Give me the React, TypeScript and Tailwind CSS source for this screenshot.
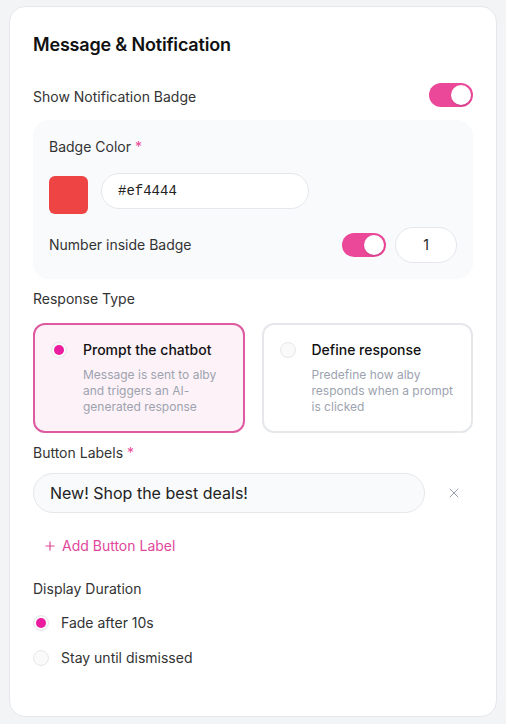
import { X, Plus } from "lucide-react";

function Toggle() {
  return (
    <div className="flex h-6 w-11 shrink-0 items-center justify-end rounded-full bg-[#ec4899] p-[2px]">
      <div className="h-5 w-5 rounded-full bg-white shadow-[0_1px_2px_rgba(0,0,0,0.15)]" />
    </div>
  );
}

function Radio({ on }: { on?: boolean }) {
  return (
    <div className="flex h-4 w-4 shrink-0 items-center justify-center rounded-full border border-gray-200 bg-[#fafafb]">
      {on && <div className="h-[10px] w-[10px] rounded-full bg-[#ec1c9f]" />}
    </div>
  );
}

const responseTypes = [
  {
    title: "Prompt the chatbot",
    body: "Message is sent to alby and triggers an AI-generated response",
    active: true,
  },
  {
    title: "Define response",
    body: "Predefine how alby responds when a prompt is clicked",
    active: false,
  },
];

export default function App() {
  return (
    <div className="min-h-[724px] bg-[#f3f4f6] pt-[6px] font-['Inter',sans-serif] text-[#333]">
      <div className="mx-[9px] h-[711px] rounded-2xl border border-gray-200 bg-white px-[23px] pt-6">
        <h2 className="text-lg leading-7 font-semibold tracking-[-0.01em] text-[#111]">
          Message &amp; Notification
        </h2>

        <div className="mt-6 flex items-center justify-between">
          <span className="mt-[3px] text-sm leading-5">Show Notification Badge</span>
          <Toggle />
        </div>

        <div className="mt-[13px] rounded-2xl bg-[#f8fafc] px-4 pt-[17px] pb-4">
          <p className="text-sm leading-5">
            Badge Color <span className="text-[#ec4899]">*</span>
          </p>
          <div className="mt-4 flex items-start gap-[13px]">
            <div className="mt-[3px] h-[38px] w-[39px] rounded-md bg-[#ef4444]" />
            <div className="flex h-9 w-[208px] items-center rounded-full border border-gray-200 bg-white px-4 font-['Liberation_Mono',monospace] text-sm text-[#222]">
              #ef4444
            </div>
          </div>
          <div className="mt-[13px] flex items-center justify-between">
            <span className="text-sm leading-5">Number inside Badge</span>
            <div className="flex items-center gap-[9px]">
              <Toggle />
              <div className="flex h-9 w-[62px] items-center justify-center rounded-full border border-gray-200 bg-white text-sm text-[#222]">
                1
              </div>
            </div>
          </div>
        </div>

        <p className="mt-[10px] text-sm leading-5">Response Type</p>
        <div className="mt-[14px] grid grid-cols-2 gap-[17px]">
          {responseTypes.map((r) => (
            <div
              key={r.title}
              className={
                r.active
                  ? "flex h-[110px] gap-4 rounded-xl border-2 border-[#de5aa0] bg-[#fdf2f8] pt-[15px] pr-4 pl-4"
                  : "flex h-[110px] gap-4 rounded-xl border-2 border-gray-200 bg-white pt-[15px] pr-4 pl-4"
              }
            >
              <div className="pt-[2px]">
                <Radio on={r.active} />
              </div>
              <div>
                <p className="text-sm leading-5 font-medium text-[#111]">{r.title}</p>
                <p className="mt-[7px] text-xs leading-4 text-[#9ca3af]">{r.body}</p>
              </div>
            </div>
          ))}
        </div>

        <p className="mt-[10px] text-sm leading-5">
          Button Labels <span className="text-[#ec4899]">*</span>
        </p>
        <div className="mt-[10px] flex items-center gap-[13px]">
          <div className="flex h-10 w-[392px] items-center rounded-full border border-gray-200 bg-[#f8fafc] px-4 text-base text-[#222]">
            New! Shop the best deals!
          </div>
          <button className="flex h-8 w-8 items-center justify-center text-gray-400">
            <X size={16} strokeWidth={1.5} />
          </button>
        </div>

        <button className="mt-[23px] ml-[10px] flex items-center gap-[5px] text-sm leading-5 text-[#e0479a]">
          <Plus size={14} strokeWidth={2} />
          Add Button Label
        </button>

        <p className="mt-[23px] text-sm leading-5">Display Duration</p>
        <div className="mt-[14px] flex flex-col gap-[15px]">
          <label className="flex items-center gap-3 text-sm leading-5">
            <Radio on />
            Fade after 10s
          </label>
          <label className="flex items-center gap-3 text-sm leading-5">
            <Radio />
            Stay until dismissed
          </label>
        </div>
      </div>
    </div>
  );
}
